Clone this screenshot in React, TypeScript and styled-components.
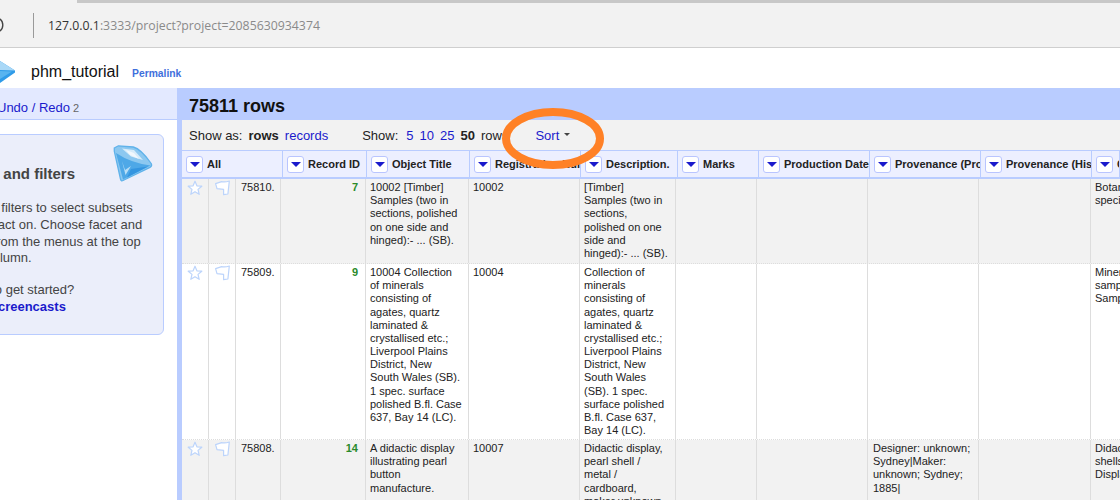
import * as React from 'react';
import styled, { createGlobalStyle } from 'styled-components';

const GlobalStyle = createGlobalStyle`
  html, body {
    margin: 0;
    padding: 0;
    background: #fff;
    overflow: hidden;
  }
  body {
    font-family: "Liberation Sans", Arial, sans-serif;
    font-size: 13px;
    color: #222;
  }
`;

const Page = styled.div`
  position: relative;
  width: 1120px;
  height: 500px;
  overflow: hidden;
`;

const Browser = styled.div`
  height: 48px;
  box-sizing: border-box;
  background: #f2f2f2;
  border-bottom: 1px solid #cfcfcf;
`;

const LoadStrip = styled.div`
  height: 3px;
  margin-left: 77px;
  background: #c8c8c8;
`;

const AddressRow = styled.div`
  display: flex;
  align-items: center;
  height: 44px;
`;

const AddressDivider = styled.div`
  width: 1px;
  height: 25px;
  margin: 0 14px 0 27px;
  background: #9a9a9a;
`;

const Address = styled.div`
  font-family: "Open Sans", sans-serif;
  font-size: 12.3px;
  color: #8a8a8a;
`;

const Host = styled.span`
  color: #333;
`;

const ProjectHeader = styled.div`
  display: flex;
  align-items: center;
  height: 40px;
  box-sizing: border-box;
  padding-top: 8px;
  background: #fff;
`;

const ProjectName = styled.span`
  margin-left: 16px;
  font-size: 16px;
  color: #111;
`;

const Permalink = styled.a`
  margin: 2px 0 0 13px;
  font-size: 10.3px;
  font-weight: 700;
  color: #3f6fdc;
`;

const Main = styled.div`
  display: flex;
  height: 412px;
`;

const LeftPanel = styled.div`
  flex: 0 0 177px;
  overflow: hidden;
`;

const UndoTab = styled.div`
  height: 32px;
  box-sizing: border-box;
  padding-top: 12px;
  background: #e3e9ff;
  border-bottom: 1px solid #b9ccff;
  white-space: nowrap;
`;

const UndoLink = styled.a`
  margin-left: -3px;
  color: #1a1acc;
`;

const UndoCount = styled.span`
  margin-left: 3px;
  font-size: 11px;
  color: #666;
`;

const HelpBox = styled.div`
  box-sizing: border-box;
  width: 264px;
  height: 201px;
  margin: 14px 0 0 -100px;
  padding: 10px 10px 0 10px;
  background: #ebeefa;
  border: 1px solid #b9ccff;
  border-radius: 6px;
  color: #444;
`;

const BoxDiamond = styled.svg`
  float: right;
  width: 40px;
  height: 40px;
`;

const HelpTitle = styled.h2`
  margin: 20px 0 0 -1px;
  padding: 0;
  font-size: 15px;
  line-height: 18px;
  font-weight: 700;
  color: #444;
  white-space: nowrap;
`;

const HelpText = styled.p`
  margin: 17px 0 0;
  font-size: 13px;
  line-height: 16.8px;
  white-space: nowrap;
  & + & {
    margin-top: 15px;
  }
`;

const HelpLink = styled.a`
  font-weight: 700;
  color: #1a1acc;
`;

const DataPanel = styled.div`
  flex: 1;
  min-width: 0;
  border-left: 5px solid #b9ccff;
  overflow: hidden;
`;

const TitleBar = styled.div`
  height: 32px;
  margin-left: -5px;
  padding-left: 12px;
  background: #b9ccff;
  font-size: 18px;
  line-height: 36px;
  font-weight: 700;
  color: #111;
`;

const ViewBar = styled.div`
  display: flex;
  align-items: center;
  height: 30px;
  padding-left: 7px;
  background: #f2f2f2;
  white-space: nowrap;
`;

const ViewLink = styled.a<{ $gap?: number }>`
  margin-left: ${(p) => p.$gap || 6}px;
  color: #1a1acc;
`;

const ViewCurrent = styled.b`
  margin-left: 6px;
  color: #222;
`;

const ViewLabel = styled.span<{ $gap?: number }>`
  margin-left: ${(p) => p.$gap || 0}px;
`;

const SortLink = styled.a`
  margin-left: 27px;
  color: #1a1acc;
`;

const Caret = styled.span`
  display: inline-block;
  margin: 0 0 1px 5px;
  border-left: 3.5px solid transparent;
  border-right: 3.5px solid transparent;
  border-top: 3.5px solid #444;
`;

const HEAD_COLUMNS = '101px 84px 103px 111px 97px 81px 111px 111px 111px 1fr';
const ROW_COLUMNS = '27px 27px 45px 85px 103px 111px 96px 81px 111px 111px 112px 1fr';

const HeadRow = styled.div`
  display: grid;
  grid-template-columns: ${HEAD_COLUMNS};
  height: 29px;
  box-sizing: border-box;
  background: #ecefff;
  border-top: 1px solid #b9ccff;
  border-bottom: 2px solid #b9ccff;
`;

const HeadCell = styled.div`
  display: flex;
  align-items: center;
  box-sizing: border-box;
  padding-left: 4px;
  border-right: 1px solid #b9ccff;
  overflow: hidden;
  white-space: nowrap;
  font-size: 11px;
  font-weight: 700;
  color: #222;
`;

const DropButton = styled.span`
  flex: 0 0 auto;
  display: flex;
  align-items: center;
  justify-content: center;
  box-sizing: border-box;
  width: 17px;
  height: 17px;
  margin-right: 4px;
  background: #fff;
  border: 1px solid #b9c5ff;
  border-radius: 3px;
  &::after {
    content: '';
    border-left: 5px solid transparent;
    border-right: 5px solid transparent;
    border-top: 5px solid #1a1acc;
  }
`;

const Row = styled.div<{ $odd: boolean; $height: number }>`
  display: grid;
  grid-template-columns: ${ROW_COLUMNS};
  height: ${(p) => p.$height}px;
  box-sizing: border-box;
  background: ${(p) => (p.$odd ? '#f2f2f2' : '#fff')};
  border-bottom: 1px dotted #ddd;
`;

const Cell = styled.div<{ $numeric?: boolean }>`
  box-sizing: border-box;
  padding: 2px ${(p) => (p.$numeric ? 7 : 0)}px 0 4px;
  border-right: 1px solid #ddd;
  overflow: hidden;
  font-size: 11px;
  line-height: 13.17px;
  white-space: pre-line;
  color: ${(p) => (p.$numeric ? '#2a8a2a' : '#222')};
  font-weight: ${(p) => (p.$numeric ? 700 : 400)};
  text-align: ${(p) => (p.$numeric ? 'right' : 'left')};
`;

const IconCell = styled(Cell)`
  padding: 1px 0 0 5px;
`;

const InsetCell = styled(Cell)`
  padding-left: 5px;
`;

const LastCell = styled(Cell)`
  border-right: 0;
`;

const Annotation = styled.svg`
  position: absolute;
  left: 498px;
  top: 104px;
  width: 110px;
  height: 70px;
  pointer-events: none;
`;

const Star = () => (
  <svg width="16" height="16" viewBox="0 0 16 16">
    <path
      d="M8 1.2 L9.9 5.8 L14.8 6.2 L11 9.4 L12.2 14.3 L8 11.7 L3.8 14.3 L5 9.4 L1.2 6.2 L6.1 5.8 Z"
      fill="#fff"
      stroke="#bcd4fb"
      strokeWidth="1.2"
      strokeLinejoin="round"
    />
  </svg>
);

const Flag = () => (
  <svg width="16" height="16" viewBox="0 0 16 16" style={{ marginLeft: 1 }}>
    <path
      d="M0.6 3.6 L6.7 1.6 Q10 2.4 14.3 1 L12.9 14 L8.6 14.6 L8.6 9.4 L2 8.6 Z"
      fill="#fff"
      stroke="#bcd4fb"
      strokeWidth="1.2"
      strokeLinejoin="round"
    />
  </svg>
);

const HEADERS = [
  'All',
  'Record ID',
  'Object Title',
  'Registration Number',
  'Description.',
  'Marks',
  'Production Date',
  'Provenance (Production)',
  'Provenance (History)',
  'Categories',
];

const ROWS = [
  {
    height: 85,
    index: '75810.',
    id: '7',
    title: '10002 [Timber]\nSamples (two in\nsections, polished\non one side and\nhinged):- ... (SB).',
    reg: '10002',
    desc: '[Timber]\nSamples (two in\nsections,\npolished on one\nside and\nhinged):- ... (SB).',
    prov: '',
    extra: 'Botanical\nspecimens',
  },
  {
    height: 176,
    index: '75809.',
    id: '9',
    title:
      '10004 Collection\nof minerals\nconsisting of\nagates, quartz\nlaminated &\ncrystallised etc.;\nLiverpool Plains\nDistrict, New\nSouth Wales (SB).\n1 spec. surface\npolished B.fl. Case\n637, Bay 14 (LC).',
    reg: '10004',
    desc: 'Collection of\nminerals\nconsisting of\nagates, quartz\nlaminated &\ncrystallised etc.;\nLiverpool Plains\nDistrict, New\nSouth Wales\n(SB). 1 spec.\nsurface polished\nB.fl. Case 637,\nBay 14 (LC).',
    prov: '',
    extra: 'Minerals\nsamples\nSamples',
  },
  {
    height: 90,
    index: '75808.',
    id: '14',
    title: 'A didactic display\nillustrating pearl\nbutton\nmanufacture.',
    reg: '10007',
    desc: 'Didactic display,\npearl shell /\nmetal /\ncardboard,\nmaker unknown,\nSydney',
    prov: 'Designer: unknown;\nSydney|Maker:\nunknown; Sydney;\n1885|',
    extra: 'Didactic\nshells\nDisplays',
  },
];

export default function App() {
  return (
    <Page>
      <GlobalStyle />
      <Browser>
        <LoadStrip />
        <AddressRow>
          <svg width="6" height="20" viewBox="0 0 6 20">
            <path d="M-2 3 A7.5 7.5 0 0 1 -2 17" fill="none" stroke="#444" strokeWidth="1.4" />
          </svg>
          <AddressDivider />
          <Address>
            <Host>127.0.0.1</Host>:3333/project?project=2085630934374
          </Address>
        </AddressRow>
      </Browser>
      <ProjectHeader>
        <svg width="15" height="24" viewBox="0 0 15 24">
          <path d="M0 1 L15 10.5 L15 12.5 L0 23 Z" fill="#2f9be8" />
          <path d="M0 1 L15 10.5 L0 10 Z" fill="#a9d8f7" />
          <path d="M0 11 L12 11.5 L0 19 Z" fill="#58b4f0" />
        </svg>
        <ProjectName>phm_tutorial</ProjectName>
        <Permalink>Permalink</Permalink>
      </ProjectHeader>
      <Main>
        <LeftPanel>
          <UndoTab>
            <UndoLink>Undo / Redo</UndoLink>
            <UndoCount>2</UndoCount>
          </UndoTab>
          <HelpBox>
            <BoxDiamond viewBox="0 0 40 40">
              <path d="M1.3 3 L5.3 0.8 L20.3 2 Q28 4 38.2 18.5 Q39.5 21 37 22.3 L10 35.5 Q8 36.5 7.5 34 L1.3 6.3 Z" fill="#8cc8f0" stroke="#5fb2ea" strokeWidth="1.3" />
              <path d="M9 3.5 L21 5 L30 15 L18 11.5 Z" fill="#d6ecfa" />
              <path d="M13 5 L21 8 L26 14 L17 10 Z" fill="#f1f8fd" />
              <path d="M3 8 Q18 18 37.5 20.5 L10 34.5 Z" fill="#4ea8e7" />
              <path d="M9 16 L12.5 30 L18 21 L12 25 Z" fill="#b8def7" />
              <path d="M18 24 L35 21.5 L14 32.5 Z" fill="#3495e0" />
            </BoxDiamond>
            <HelpTitle>Using facets and filters</HelpTitle>
            <HelpText>
              Use facets and filters to select subsets
              <br />
              of your data to act on. Choose facet and
              <br />
              filter methods from the menus at the top
              <br />
              of each data column.
            </HelpText>
            <HelpText>
              Not sure how to get started?
              <br />
              <HelpLink>Watch these screencasts</HelpLink>
            </HelpText>
          </HelpBox>
        </LeftPanel>
        <DataPanel>
          <TitleBar>75811 rows</TitleBar>
          <ViewBar>
            <span>Show as:</span>
            <ViewCurrent>rows</ViewCurrent>
            <ViewLink>records</ViewLink>
            <ViewLabel $gap={34}>Show:</ViewLabel>
            <ViewLink $gap={8}>5</ViewLink>
            <ViewLink>10</ViewLink>
            <ViewLink>25</ViewLink>
            <ViewCurrent>50</ViewCurrent>
            <ViewLabel $gap={6}>rows</ViewLabel>
            <SortLink>Sort</SortLink>
            <Caret />
          </ViewBar>
          <HeadRow>
            {HEADERS.map((label) => (
              <HeadCell key={label}>
                <DropButton />
                {label}
              </HeadCell>
            ))}
          </HeadRow>
          {ROWS.map((row, i) => (
            <Row key={row.id} $odd={i % 2 === 0} $height={row.height}>
              <IconCell>
                <Star />
              </IconCell>
              <IconCell>
                <Flag />
              </IconCell>
              <InsetCell>{row.index}</InsetCell>
              <Cell $numeric>{row.id}</Cell>
              <Cell>{row.title}</Cell>
              <Cell>{row.reg}</Cell>
              <Cell>{row.desc}</Cell>
              <Cell />
              <Cell />
              <InsetCell>{row.prov}</InsetCell>
              <Cell />
              <LastCell>{row.extra}</LastCell>
            </Row>
          ))}
        </DataPanel>
      </Main>
      <Annotation viewBox="0 0 110 70">
        <ellipse cx="55" cy="34.5" rx="47" ry="26.5" fill="none" stroke="#ff8126" strokeWidth="8" />
      </Annotation>
    </Page>
  );
}
